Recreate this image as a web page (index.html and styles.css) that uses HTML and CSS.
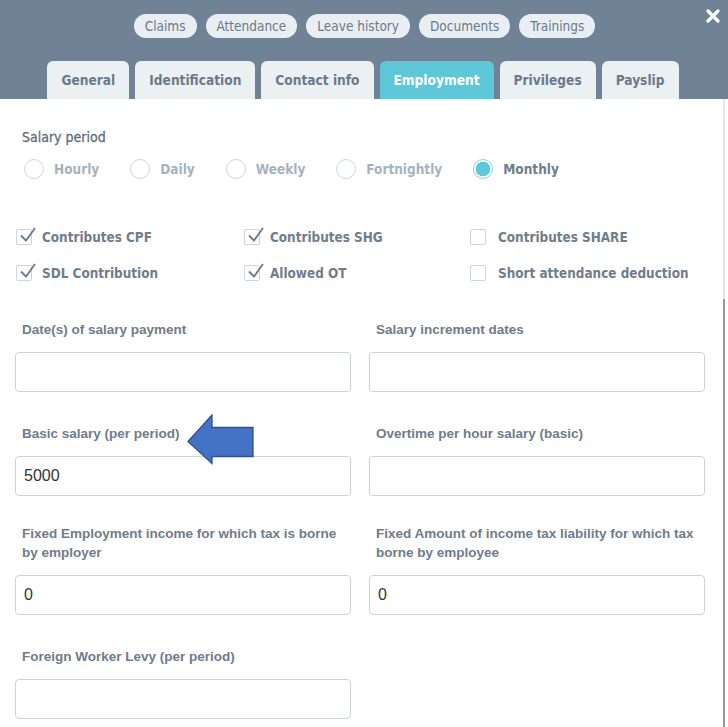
FILE: index.html
```html
<!DOCTYPE html>
<html lang="en">
<head>
<meta charset="utf-8">
<title>Employment</title>
<link rel="stylesheet" href="styles.css">
</head>
<body>
<div class="modal">
  <header class="top">
    <nav class="pills">
      <span class="pill">Claims</span>
      <span class="pill">Attendance</span>
      <span class="pill">Leave history</span>
      <span class="pill">Documents</span>
      <span class="pill">Trainings</span>
    </nav>
    <button class="close" aria-label="Close">
      <svg width="14" height="14" viewBox="0 0 14 14"><path d="M2 2 L12 12 M12 2 L2 12" stroke="#fff" stroke-width="3.2" stroke-linecap="round"/></svg>
    </button>
    <nav class="tabs">
      <span class="tab">General</span>
      <span class="tab">Identification</span>
      <span class="tab">Contact info</span>
      <span class="tab active">Employment</span>
      <span class="tab">Privileges</span>
      <span class="tab">Payslip</span>
    </nav>
  </header>

  <main class="content">
    <div class="section-label">Salary period</div>
    <div class="radios">
      <label class="radio"><span class="circle"></span>Hourly</label>
      <label class="radio"><span class="circle"></span>Daily</label>
      <label class="radio"><span class="circle"></span>Weekly</label>
      <label class="radio"><span class="circle"></span>Fortnightly</label>
      <label class="radio selected"><span class="circle"></span>Monthly</label>
    </div>

    <div class="checks">
      <label class="check on"><span class="box"><svg width="20" height="18" viewBox="0 0 20 18"><path d="M4 9.5 L9 14.5 L18 2" fill="none" stroke="#6c7a89" stroke-width="1.8"/></svg></span>Contributes CPF</label>
      <label class="check on"><span class="box"><svg width="20" height="18" viewBox="0 0 20 18"><path d="M4 9.5 L9 14.5 L18 2" fill="none" stroke="#6c7a89" stroke-width="1.8"/></svg></span>Contributes SHG</label>
      <label class="check"><span class="box"></span>Contributes SHARE</label>
      <label class="check on"><span class="box"><svg width="20" height="18" viewBox="0 0 20 18"><path d="M4 9.5 L9 14.5 L18 2" fill="none" stroke="#6c7a89" stroke-width="1.8"/></svg></span>SDL Contribution</label>
      <label class="check on"><span class="box"><svg width="20" height="18" viewBox="0 0 20 18"><path d="M4 9.5 L9 14.5 L18 2" fill="none" stroke="#6c7a89" stroke-width="1.8"/></svg></span>Allowed OT</label>
      <label class="check"><span class="box"></span>Short attendance deduction</label>
    </div>

    <div class="fields">
      <div class="field">
        <div class="flabel">Date(s) of salary payment</div>
        <div class="input"></div>
      </div>
      <div class="field">
        <div class="flabel">Salary increment dates</div>
        <div class="input"></div>
      </div>
      <div class="field">
        <div class="flabel">Basic salary (per period)</div>
        <div class="input">5000</div>
      </div>
      <div class="field">
        <div class="flabel">Overtime per hour salary (basic)</div>
        <div class="input"></div>
      </div>
      <div class="field tall">
        <div class="flabel">Fixed Employment income for which tax is borne by employer</div>
        <div class="input">0</div>
      </div>
      <div class="field tall">
        <div class="flabel">Fixed Amount of income tax liability for which tax borne by employee</div>
        <div class="input">0</div>
      </div>
      <div class="field">
        <div class="flabel">Foreign Worker Levy (per period)</div>
        <div class="input"></div>
      </div>
    </div>

    <svg class="arrow" width="70" height="52" viewBox="0 0 70 52">
      <path d="M1 27.5 L25 1 L25 13.5 L66 13.5 L66 42.5 L25 42.5 L25 49.5 Z" fill="#4472c4" stroke="#2f528f" stroke-width="1.3" stroke-linejoin="miter"/>
    </svg>
  </main>

  <div class="scrollbar"><div class="thumb"></div></div>
</div>
</body>
</html>
```

FILE: styles.css
```css
* { box-sizing: border-box; }

html, body {
  margin: 0;
  padding: 0;
  background: #ffffff;
}

body {
  width: 728px;
  height: 727px;
  overflow: hidden;
  font-family: "DejaVu Sans Condensed", "DejaVu Sans", sans-serif;
  font-stretch: condensed;
}

.modal {
  position: relative;
  width: 728px;
  height: 727px;
  overflow: hidden;
}

/* ---------- header ---------- */
.top {
  position: relative;
  background: #708295;
  height: 99px;
  padding-top: 14px;
}

.pills {
  display: flex;
  justify-content: center;
  gap: 9px;
  height: 24px;
  padding-left: 1px;
}

.pill {
  display: flex;
  align-items: center;
  height: 24px;
  padding: 0 11px;
  border-radius: 12px;
  background: #e9eef2;
  color: #6b7a8a;
  font-size: 13.5px;
  white-space: nowrap;
}

.close {
  position: absolute;
  top: 8px;
  right: 7px;
  width: 16px;
  height: 16px;
  padding: 0;
  border: 0;
  background: transparent;
  display: flex;
  align-items: center;
  justify-content: center;
}

.tabs {
  display: flex;
  justify-content: center;
  gap: 6px;
  margin-top: 23px;
  height: 38px;
  padding-right: 2px;
}

.tab {
  display: flex;
  align-items: center;
  height: 38px;
  padding: 0 14px;
  border-radius: 6px 6px 0 0;
  background: #ebf0f3;
  color: #6b7a8a;
  font-weight: bold;
  font-size: 13.6px;
  white-space: nowrap;
}

.tab.active {
  background: #5ec8d8;
  color: #ffffff;
}

/* ---------- content ---------- */
.content {
  position: relative;
  padding: 29px 0 0 0;
}

.section-label {
  padding-left: 22px;
  font-size: 14px;
  line-height: 18px;
  color: #5f6e7e;
  -webkit-text-stroke: 0.3px #5f6e7e;
}

.radios {
  display: flex;
  align-items: center;
  gap: 31px;
  margin-top: 12px;
  padding-left: 24px;
  height: 22px;
}

.radio {
  display: flex;
  align-items: center;
  gap: 10px;
  font-weight: bold;
  font-size: 13.5px;
  color: #a6b2be;
}

.circle {
  width: 20px;
  height: 20px;
  border-radius: 50%;
  border: 1px solid #cfd6dd;
  background: #fff;
}

.radio.selected {
  color: #6f7d8c;
}

.radio.selected .circle {
  border: 1.5px solid #7fd3e0;
  background: radial-gradient(circle, #5ec8d8 0 7px, #ffffff 7.5px);
}

.checks {
  display: grid;
  grid-template-columns: 228px 226px 230px;
  row-gap: 18px;
  margin-top: 48px;
  padding-left: 16px;
}

.check {
  display: flex;
  align-items: center;
  gap: 10px;
  height: 18px;
  font-weight: bold;
  font-size: 13.4px;
  color: #6f7d8c;
  white-space: nowrap;
}

.check:nth-child(3n) {
  gap: 12px;
}

.box {
  position: relative;
  width: 16px;
  height: 16px;
  border: 1px solid #cdd5dc;
  border-radius: 2px;
  background: #fff;
  flex: none;
}

.box svg {
  position: absolute;
  left: 0px;
  top: -4px;
}

/* ---------- fields ---------- */
.fields {
  display: grid;
  grid-template-columns: 336px 336px;
  column-gap: 18px;
  padding-left: 15px;
  margin-top: 38px;
}

.field {
  margin-bottom: 32px;
}

.field.tall {
  margin-top: -4px;
}

.flabel {
  padding-left: 7px;
  font-family: "Liberation Sans", Arial, sans-serif;
  font-stretch: normal;
  font-weight: bold;
  font-size: 13.5px;
  line-height: 19px;
  color: #6f7c8b;
  margin-bottom: 13px;
}

.input {
  height: 40px;
  border: 1px solid #c9d4dc;
  border-radius: 4px;
  background: #fff;
  display: flex;
  align-items: center;
  padding-left: 8px;
  font-family: "Liberation Sans", Arial, sans-serif;
  font-stretch: normal;
  font-size: 16px;
  color: #333;
}

/* annotation arrow overlay */
.arrow {
  position: absolute;
  left: 187px;
  top: 315px;
}

/* scrollbar */
.scrollbar {
  position: absolute;
  right: 3px;
  top: 99px;
  bottom: 0;
  width: 2px;
  background: #e6e6e6;
}

.thumb {
  position: absolute;
  left: 0;
  right: 0;
  top: 200px;
  bottom: 0;
  background: #9a9a9a;
}
```
